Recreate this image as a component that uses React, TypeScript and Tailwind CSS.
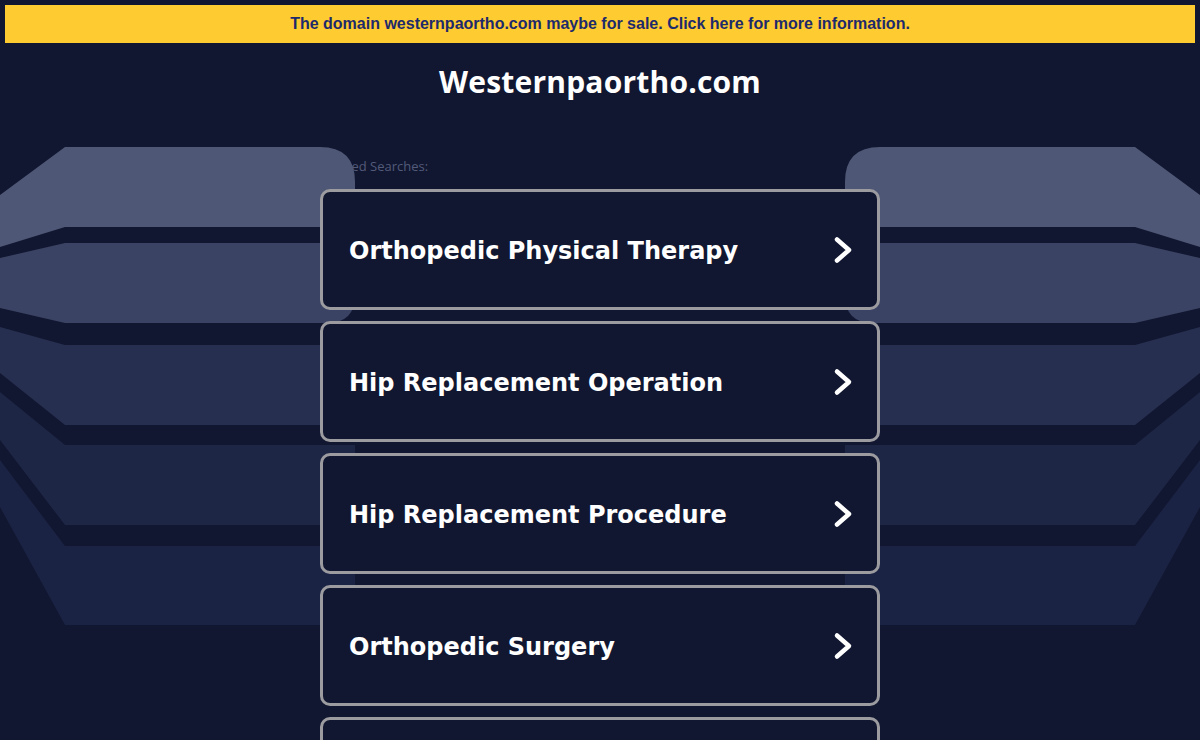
const searches = [
  "Orthopedic Physical Therapy",
  "Hip Replacement Operation",
  "Hip Replacement Procedure",
  "Orthopedic Surgery",
];

// decorative side bands of the parked-domain background
function SideBands({ className }: { className?: string }) {
  return (
    <svg
      viewBox="0 0 360 640"
      width="360"
      height="640"
      className={className}
      aria-hidden
    >
      <path d="M65 147 L320 147 Q355 147 355 182 L355 227 L65 227 L0 247 L0 195 Z" fill="#4e5775" />
      <path d="M65 243 L355 243 L355 295 Q355 323 327 323 L65 323 L0 308 L0 258 Z" fill="#3a4363" />
      <path d="M65 345 L355 345 L355 425 L65 425 L0 373 L0 327 Z" fill="#272f50" />
      <path d="M65 445 L355 445 L355 525 L65 525 L0 440 L0 392 Z" fill="#1e2646" />
      <path d="M65 546 L355 546 L355 597 Q355 625 327 625 L65 625 L0 507 L0 460 Z" fill="#1b2344" />
    </svg>
  );
}

function Chevron() {
  return (
    <svg viewBox="0 0 20 28" width="20" height="28" fill="none" stroke="currentColor" strokeWidth="4.5" strokeLinecap="round" strokeLinejoin="round" aria-hidden>
      <path d="M4 3.5L16 14L4 24.5" />
    </svg>
  );
}

export default function App() {
  return (
    <div className="relative min-h-screen overflow-hidden bg-[#111730]">
      <div className="p-[5px]">
        <a
          href="#"
          className="flex h-[38px] items-center justify-center bg-[#fecb30] text-[16px] font-bold text-[#1d2a6b]"
          style={{ fontFamily: '"Liberation Sans", Arial, sans-serif' }}
        >
          The domain westernpaortho.com maybe for sale. Click here for more information.
        </a>
      </div>

      <h1
        className="mt-[14px] text-center text-[30px] font-bold leading-[40px] tracking-[0.2px] text-white"
        style={{ fontFamily: '"Open Sans", sans-serif' }}
      >
        Westernpaortho.com
      </h1>

      <SideBands className="absolute left-0 top-0" />
      <SideBands className="absolute right-0 top-0 -scale-x-100" />

      <div className="mx-auto mt-[56px] w-[560px]">
        <p
          className="pl-[1px] text-[13px] leading-[16px] text-[#535a7a]"
          style={{ fontFamily: '"Open Sans", sans-serif' }}
        >
          Related Searches:
        </p>
        <div className="relative z-10 mt-[15px] flex flex-col gap-[11px]">
          {searches.map((s) => (
            <a
              key={s}
              href="#"
              className="flex h-[121px] items-center justify-between rounded-[10px] border-[3px] border-[#9b9ba0] bg-[#111730] pl-[26px] pr-[24px] text-[24px] font-bold text-white"
              style={{ fontFamily: '"DejaVu Sans", Verdana, sans-serif' }}
            >
              <span className="pt-[2px]">{s}</span>
              <Chevron />
            </a>
          ))}
          <div className="h-[121px] rounded-[10px] border-[3px] border-[#9b9ba0] bg-[#111730]" />
        </div>
      </div>
    </div>
  );
}
